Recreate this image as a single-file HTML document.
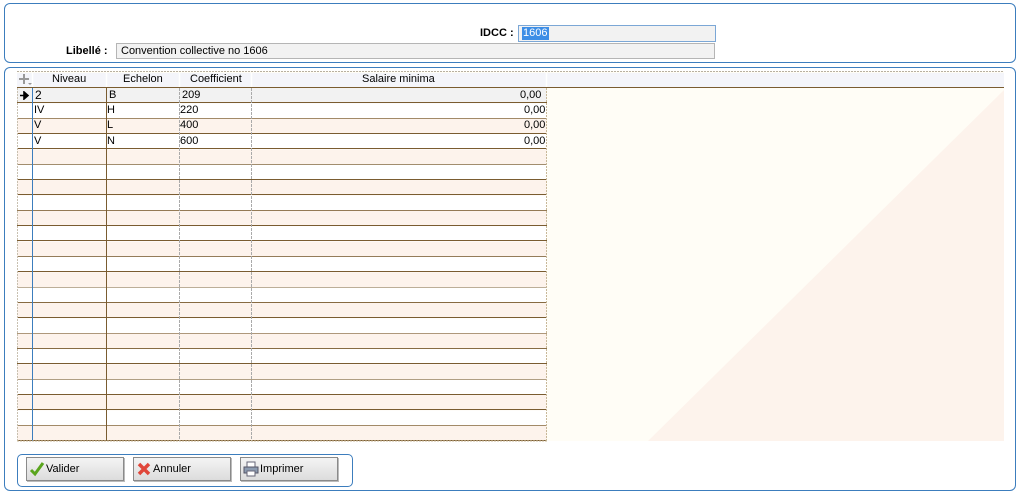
<!DOCTYPE html>
<html><head><meta charset="utf-8">
<style>
*{margin:0;padding:0;box-sizing:border-box}
body{width:1022px;height:494px;background:#fff;position:relative;overflow:hidden;font-family:"Liberation Sans",Arial,sans-serif;font-size:11px;color:#000}
.abs{position:absolute}
.panel{position:absolute;border:1px solid #3c7dbd;border-radius:6px}
.lbl{position:absolute;font-weight:bold;font-size:11px}
.cell{position:absolute;font-size:11px;line-height:15px;white-space:nowrap}
.btn{position:absolute;top:457px;width:98px;height:24px;border:1px solid #8a8a8a;background:linear-gradient(#f4f4f4,#dcdcdc);box-shadow:1px 1px 0 #bbb;font-size:11px;line-height:22px}
.btn svg{position:absolute;left:2px;top:3px}
.btn span{position:absolute;left:19px}
</style></head><body>
<div class="panel" style="left:4px;top:3px;width:1012px;height:60px"></div>
<div class="lbl" style="left:480px;top:27px">IDCC :</div>
<div class="abs" style="left:518px;top:25px;width:198px;height:17px;border:1px solid #7ba7d6;background:#f2f2f2"></div>
<div class="abs" style="left:522px;top:27px;width:27px;height:13px;background:#3d8ee6;color:#fff;font-size:11px;line-height:13px;padding-left:1px">1606</div>
<div class="lbl" style="left:66px;top:45px">Libellé :</div>
<div class="abs" style="left:116px;top:43px;width:599px;height:16px;border:1px solid #b5b5b5;background:#f2f2f2;font-size:11px;line-height:14px;padding-left:4px">Convention collective no 1606</div>

<div class="panel" style="left:4px;top:67px;width:1012px;height:424px"></div>

<svg class="abs" style="left:0;top:0" width="1022" height="494">
<rect x="17" y="71" width="987" height="370" fill="#fffdf6"/>
<polygon points="648,441 1004,441 1004,90" fill="#fdf3ec"/>
<line x1="17" y1="71.5" x2="1004" y2="71.5" stroke="#b8b0a0" stroke-dasharray="2,1"/>
<rect x="17" y="73" width="987" height="14" fill="#f4f5fa"/>
<g stroke="#fff" stroke-width="1.5"><line x1="32.5" y1="73" x2="32.5" y2="87"/><line x1="106.5" y1="73" x2="106.5" y2="87"/><line x1="179.5" y1="73" x2="179.5" y2="87"/><line x1="251.5" y1="73" x2="251.5" y2="87"/><line x1="546.5" y1="73" x2="546.5" y2="87"/></g>
<line x1="17" y1="87.5" x2="1004" y2="87.5" stroke="#7a5c30"/>
<g id="rows"></g>
</svg>

<div class="cell" style="left:52px;top:72px;line-height:14px">Niveau</div>
<div class="cell" style="left:123px;top:72px;line-height:14px">Echelon</div>
<div class="cell" style="left:190px;top:72px;line-height:14px">Coefficient</div>
<div class="cell" style="left:362px;top:72px;line-height:14px">Salaire minima</div>
<svg class="abs" style="left:18px;top:73px" width="14" height="13"><path d="M6 1v10M1 6h10" stroke="#999" stroke-width="2"/><path d="M10 10l2 2 2-2" fill="#999"/></svg>

<div class="cell" style="left:35px;top:88px;font-size:12px">2</div>
<div class="cell" style="left:109px;top:88px">B</div>
<div class="cell" style="left:182px;top:88px">209</div>
<div class="cell" style="left:520px;top:88px">0,00</div>
<svg class="abs" style="left:20px;top:91px" width="10" height="9"><path d="M0 4.5h5M4 1l4 3.5-4 3.5z" stroke="#000" stroke-width="1.6" fill="#000"/></svg>

<div class="cell" style="left:34px;top:103px">IV</div><div class="cell" style="left:107px;top:103px">H</div><div class="cell" style="left:180px;top:103px">220</div><div class="cell" style="left:524px;top:103px">0,00</div>
<div class="cell" style="left:34px;top:118px">V</div><div class="cell" style="left:107px;top:118px">L</div><div class="cell" style="left:180px;top:118px">400</div><div class="cell" style="left:524px;top:118px">0,00</div>
<div class="cell" style="left:34px;top:134px">V</div><div class="cell" style="left:107px;top:134px">N</div><div class="cell" style="left:180px;top:134px">600</div><div class="cell" style="left:524px;top:134px">0,00</div>

<div class="panel" style="left:17px;top:454px;width:336px;height:33px;border-radius:5px"></div>
<div class="btn" style="left:26px"><svg width="16" height="16"><path d="M2 9l4 4 8-11" stroke="#5aa51d" stroke-width="3" fill="none"/></svg><span>Valider</span></div>
<div class="btn" style="left:133px"><svg width="16" height="16"><path d="M3 3l10 10M13 3L3 13" stroke="#e0463a" stroke-width="3.5"/></svg><span>Annuler</span></div>
<div class="btn" style="left:240px"><svg width="16" height="16"><rect x="4" y="1" width="8" height="5" fill="#fff" stroke="#667"/><rect x="1" y="6" width="14" height="6" fill="#8c9bb0" stroke="#556"/><rect x="4" y="10" width="8" height="5" fill="#fff" stroke="#667"/></svg><span>Imprimer</span></div>

<script>
(function(){
var g=document.getElementById('rows'),s='';
var h=353/23;
for(var i=0;i<23;i++){
 var y=88+i*h;
 var c=i==0?'#f2f2f2':(i%2?'#ffffff':'#fdf3ec');
 s+='<rect x="17" y="'+y.toFixed(1)+'" width="530" height="'+(h+0.2).toFixed(1)+'" fill="'+c+'"/>';
 var yl=Math.round(88+(i+1)*h)-0.5;
 s+='<line x1="17" y1="'+yl+'" x2="547" y2="'+yl+'" stroke="#7a5c30" stroke-width="1.1"/>';
}
s+='<line x1="17.5" y1="88" x2="17.5" y2="441" stroke="#c8c0b0" stroke-dasharray="2,1"/>';
s+='<line x1="32.5" y1="88" x2="32.5" y2="441" stroke="#3c7dbd"/>';
s+='<line x1="106.5" y1="88" x2="106.5" y2="441" stroke="#7a5c30"/>';
s+='<line x1="179.5" y1="88" x2="179.5" y2="441" stroke="#aaa" stroke-dasharray="3,1"/>';
s+='<line x1="251.5" y1="88" x2="251.5" y2="441" stroke="#aaa" stroke-dasharray="3,1"/>';
s+='<line x1="546.5" y1="88" x2="546.5" y2="441" stroke="#c8b898" stroke-dasharray="2,1"/>';
s+='<line x1="17" y1="441" x2="547" y2="441" stroke="#c8b898" stroke-dasharray="2,1"/>';
g.innerHTML=s;
})();
</script>
</body></html>
